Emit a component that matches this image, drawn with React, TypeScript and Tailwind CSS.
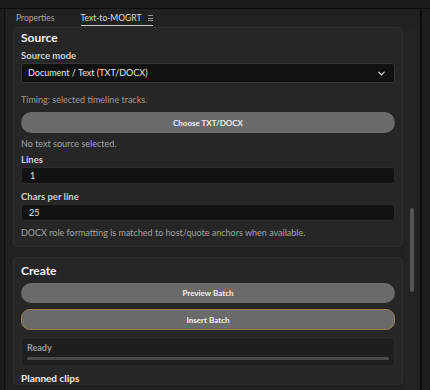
import React from "react";
import { ChevronDown } from "lucide-react";

const font = { fontFamily: "Lato, Inter, 'Liberation Sans', sans-serif" };

export default function App() {
  return (
    <div className="w-[430px] h-[390px] bg-[#1b1b1b] overflow-hidden flex flex-col" style={font}>
      <div className="h-[8px] bg-[#1b1b1b] border-b border-[#0d0d0d] box-content" />
      <div className="flex flex-1 min-h-0">
        <div className="w-[4px] bg-[#1c1c1c] border-r border-[#0e0e0e] box-content" />
        <div className="w-[1px] bg-[#1d1d1d]" />
        <div className="flex-1 min-w-0 bg-[#212121] flex flex-col">
          {/* tab bar */}
          <div className="h-[18px] flex items-start pl-[10px] leading-[12px]">
            <div className="pt-[3px] text-[8.5px] text-[#a8a8a8]">Properties</div>
            <div className="ml-[26px] pt-[3px] flex items-start border-b-[1.5px] border-[#cfcfcf] h-[17px]">
              <span className="text-[8.5px] text-[#dedede]">Text-to-MOGRT</span>
              <span className="ml-[7px] mt-[3px] flex flex-col gap-[1.5px]">
                <span className="block w-[5px] h-[1px] bg-[#9a9a9a]" />
                <span className="block w-[5px] h-[1px] bg-[#9a9a9a]" />
                <span className="block w-[5px] h-[1px] bg-[#9a9a9a]" />
              </span>
            </div>
          </div>
          <div className="flex flex-1 min-h-0">
            <div className="flex-1 min-w-0 pl-[7px] flex flex-col">
              {/* Source card */}
              <div className="w-[390px] bg-[#262626] border border-[#2f2f2f] rounded-[4px] px-[7px] pt-[3px] pb-[7px] flex flex-col">
                <div className="text-[12px] leading-[14px] font-bold text-[#f2f2f2]">Source</div>
                <div className="mt-[5px] text-[9.5px] leading-[12px] font-bold text-[#cdcdcd]">Source mode</div>
                <div className="mt-[1px] h-[20px] bg-[#111111] border border-[#363636] rounded-[3px] flex items-center justify-between pl-[6px] pr-[7px]">
                  <span className="text-[9px] text-[#e6e6e6]">Document / Text (TXT/DOCX)</span>
                  <ChevronDown size={11} strokeWidth={2.6} color="#dcdcdc" />
                </div>
                <div className="mt-[11px] text-[9px] leading-[12px] text-[#9d9d9d]">Timing: selected timeline tracks.</div>
                <div className="mt-[6px] h-[21px] bg-[#6a6a6a] rounded-full flex items-center justify-center text-[8px] font-bold text-[#f0f0f0]">
                  Choose TXT/DOCX
                </div>
                <div className="mt-[5px] text-[9px] leading-[12px] text-[#a3a3a3]">No text source selected.</div>
                <div className="mt-[4px] text-[9.5px] leading-[12px] font-bold text-[#cdcdcd]">Lines</div>
                <div className="mt-[1px] h-[17px] bg-[#121212] border border-[#2c2c2c] rounded-[3px] flex items-center pl-[8px] text-[9px] text-[#e8e8e8]">1</div>
                <div className="mt-[7px] text-[9.5px] leading-[12px] font-bold text-[#cdcdcd]">Chars per line</div>
                <div className="mt-[1px] h-[17px] bg-[#121212] border border-[#2c2c2c] rounded-[3px] flex items-center pl-[7px] text-[9px] text-[#e8e8e8]">25</div>
                <div className="mt-[6px] text-[9px] leading-[12px] text-[#a3a3a3]">DOCX role formatting is matched to host/quote anchors when available.</div>
              </div>
              {/* Create card */}
              <div className="mt-[10px] w-[390px] bg-[#262626] border border-[#2f2f2f] rounded-[4px] px-[7px] pt-[6px] flex flex-col">
                <div className="text-[12px] leading-[14px] font-bold text-[#f2f2f2]">Create</div>
                <div className="mt-[5px] h-[20px] bg-[#6a6a6a] rounded-full flex items-center justify-center text-[8px] font-bold text-[#f0f0f0]">
                  Preview Batch
                </div>
                <div className="mt-[6px] h-[21px] bg-[#6a6a6a] border border-[#9a8050] rounded-[9px] flex items-center justify-center text-[8px] font-bold text-[#f0f0f0]">
                  Insert Batch
                </div>
                <div className="mt-[7px] h-[29px] bg-[#1e1e1e] border border-[#2c2c2c] rounded-[3px] px-[5px] pt-[4px] flex flex-col">
                  <div className="text-[9px] leading-[11px] font-bold text-[#9a9a9a]">Ready</div>
                  <div className="mt-[4px] h-[3px] bg-[#4a4a4a] rounded-full" />
                </div>
                <div className="mt-[6px] text-[10px] leading-[12px] font-bold text-[#ededed]">Planned clips</div>
              </div>
            </div>
            {/* scrollbar gutter */}
            <div className="w-[16px] bg-[#232323] flex justify-center pt-[181px]">
              <div className="w-[4px] h-[84px] bg-[#555555] rounded-full" />
            </div>
          </div>
        </div>
        <div className="w-[2px] bg-[#0c0c0c]" />
        <div className="w-[8px] bg-[#1e1e1e]" />
      </div>
    </div>
  );
}
